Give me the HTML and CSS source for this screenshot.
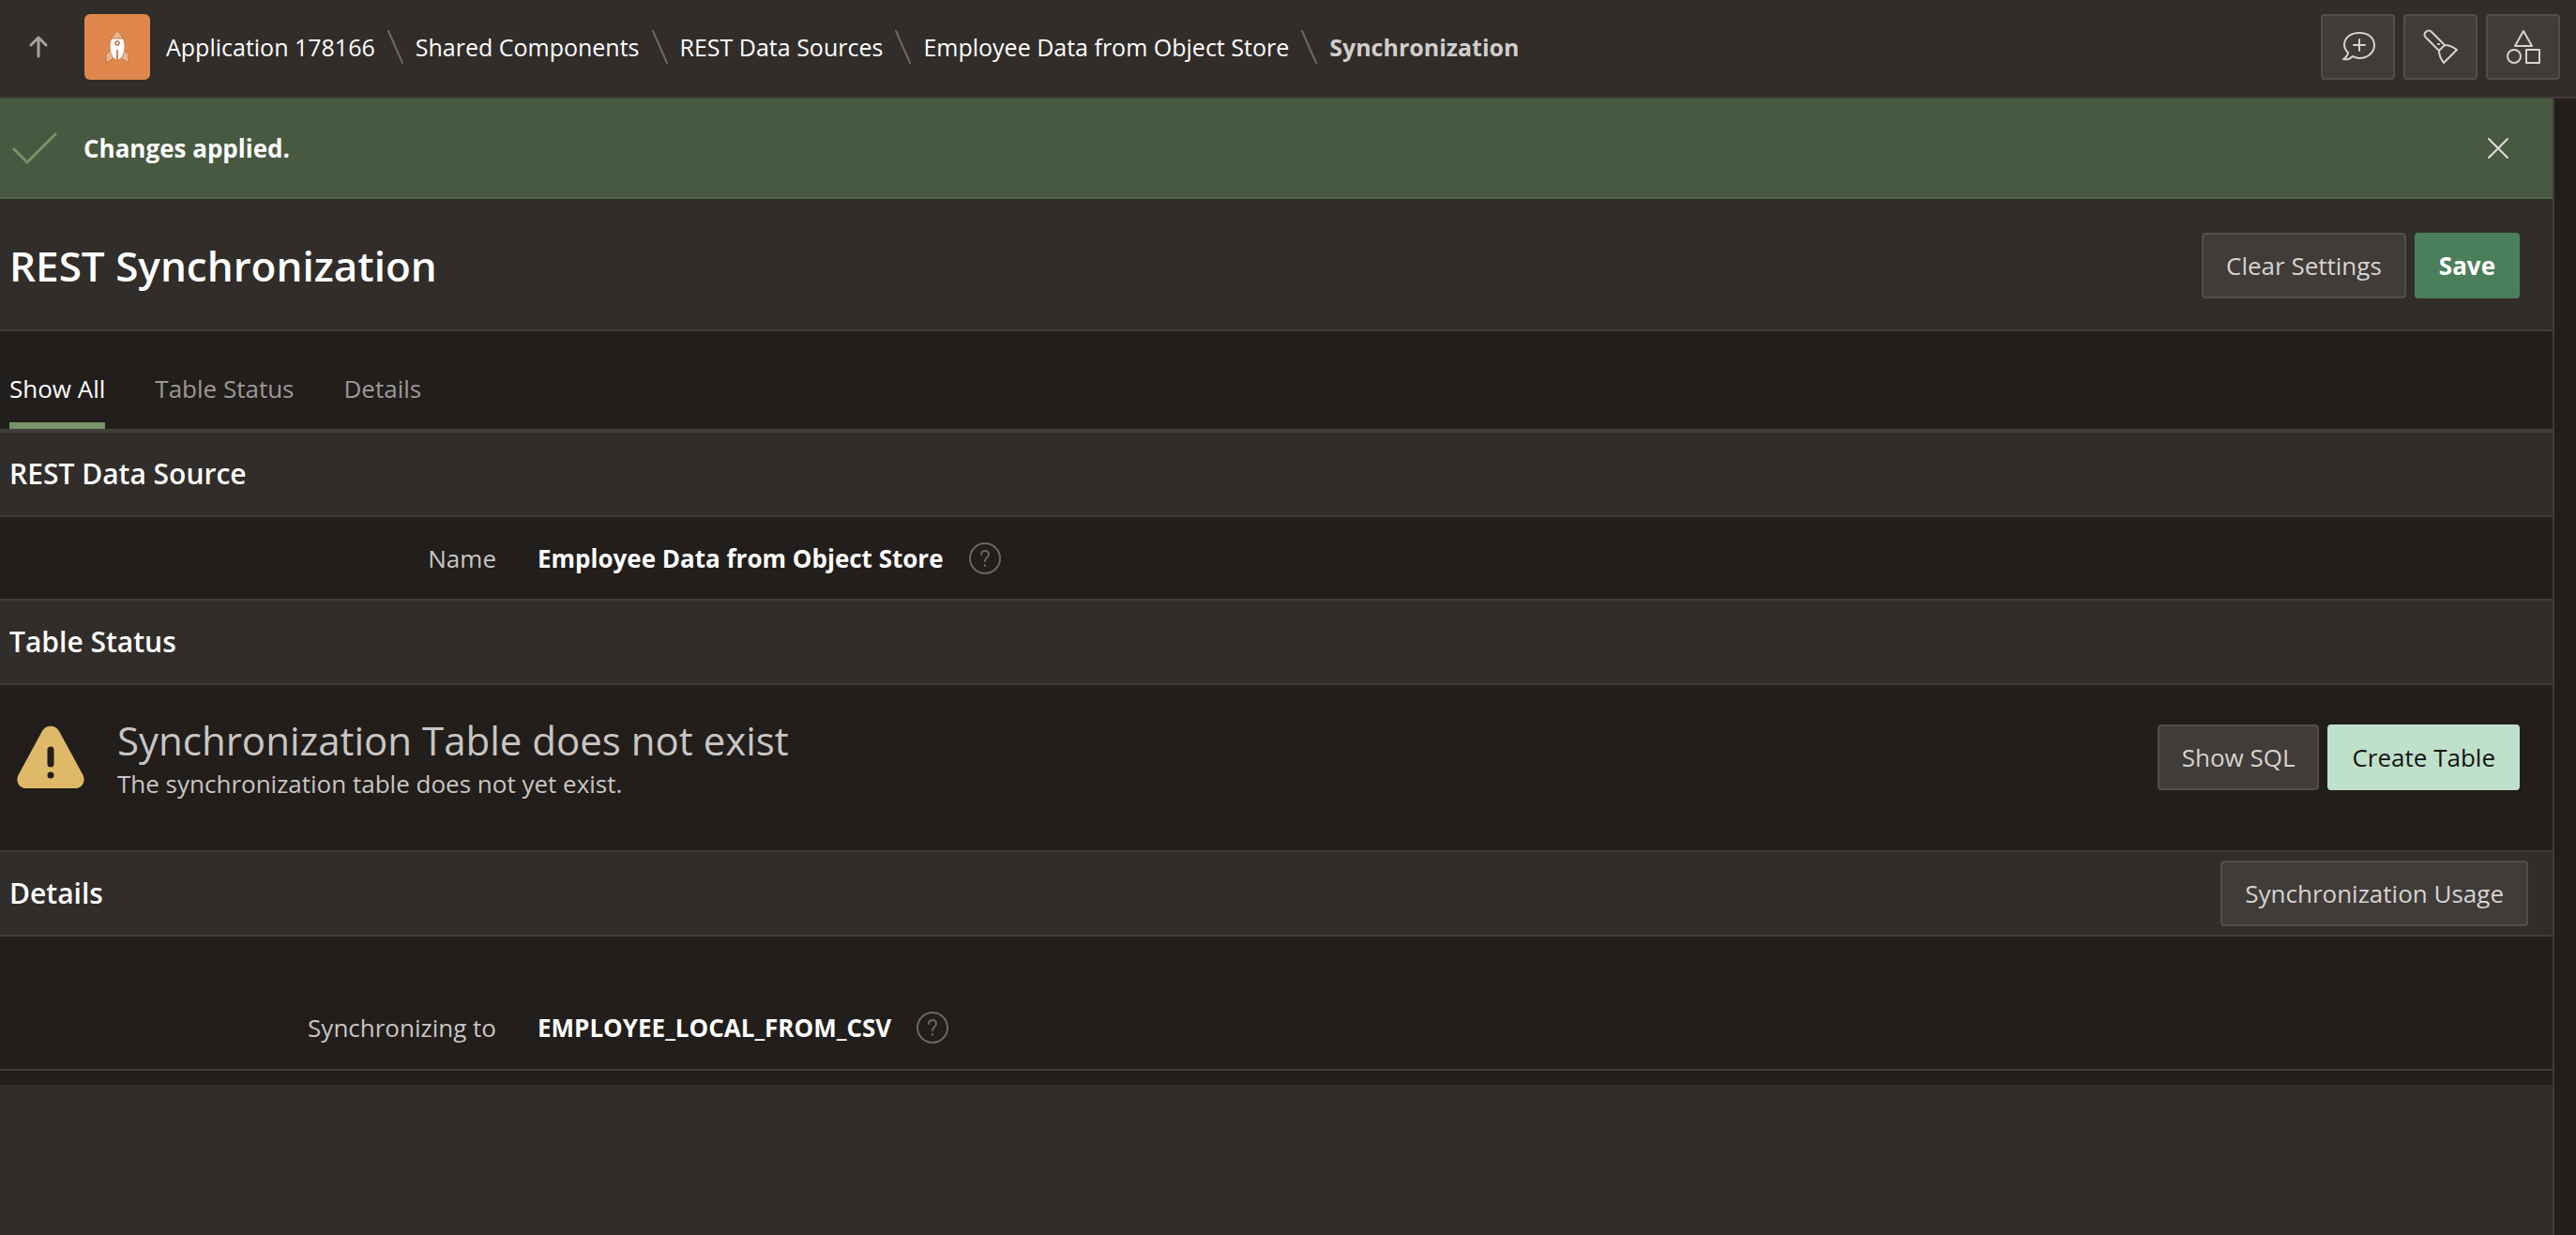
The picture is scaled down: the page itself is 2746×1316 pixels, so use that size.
FILE: index.html
```html
<!DOCTYPE html>
<html lang="en">
<head>
  <meta charset="UTF-8">
  <title>REST Synchronization</title>
  <link rel="stylesheet" href="styles.css">
</head>
<body>

  <header class="topbar">
    <a class="up-link" href="#" aria-label="Up">
      <svg width="20" height="26" viewBox="0 0 20 26" fill="none" stroke="currentColor" stroke-width="3" stroke-linecap="round" stroke-linejoin="round">
        <path d="M10 23V3M2 11l8-8 8 8"/>
      </svg>
    </a>
    <span class="app-icon">
      <svg width="26" height="36" viewBox="0 0 26 36">
        <path d="M6 21l-5 5v9l8-5zM20 21l5 5v9l-8-5z" fill="#eab48e" stroke="#bf7344"/>
        <path d="M13 1c5 4 8 10 8 17 0 6-2 10-5 13-2 1-4 1-6 0-3-3-5-7-5-13C5 11 8 5 13 1z" fill="#fff" stroke="#d08252"/>
        <path d="M13 1c3 3 5 5 6 8H7c1-3 3-5 6-8z" fill="#eab48e" stroke="#bf7344"/>
        <circle cx="13" cy="14" r="2" fill="#fff" stroke="#bf7344" stroke-width="1.5"/>
        <path d="M13 21v13" stroke="#c98560" stroke-width="2"/>
      </svg>
    </span>
    <nav class="breadcrumb">
      <a href="#">Application 178166</a>
      <svg class="sep" width="17" height="36" viewBox="0 0 17 36"><path d="M1 1l15 34"/></svg>
      <a href="#">Shared Components</a>
      <svg class="sep" width="17" height="36" viewBox="0 0 17 36"><path d="M1 1l15 34"/></svg>
      <a href="#">REST Data Sources</a>
      <svg class="sep" width="17" height="36" viewBox="0 0 17 36"><path d="M1 1l15 34"/></svg>
      <a href="#">Employee Data from Object Store</a>
      <svg class="sep" width="17" height="36" viewBox="0 0 17 36"><path d="M1 1l15 34"/></svg>
      <strong>Synchronization</strong>
    </nav>
    <div class="tools">
      <button class="btn icon-btn" type="button" aria-label="Feedback">
        <svg width="38" height="38" viewBox="0 0 38 38">
          <path d="M8 25C5 22 4 20 4 17 4 9 11 4 20 4s16 5 16 13-7 14-16 14c-3 0-5-1-7-2-2 2-6 4-10 3 3-2 5-4 5-7z"/>
          <path d="M20 11v12M14 17h12"/>
        </svg>
      </button>
      <button class="btn icon-btn" type="button" aria-label="Utilities">
        <svg width="38" height="38" viewBox="0 0 38 38">
          <path d="M17 23L3 9C1 7 1 4 3 3c2-2 4-2 6 0l14 14zM23 17c5 0 9 2 13 5L22 36c-3-4-5-8-5-13"/>
          <path d="M16 16h1"/>
        </svg>
      </button>
      <button class="btn icon-btn" type="button" aria-label="Shared components">
        <svg width="38" height="38" viewBox="0 0 38 38">
          <path d="M19 2l9 16H10zM22 22h14v14H22z"/>
          <circle cx="9" cy="29" r="7"/>
        </svg>
      </button>
    </div>
  </header>

  <div class="layout">
    <main>
      <div class="alert">
        <svg class="check" width="48" height="34" viewBox="0 0 48 34"><path d="M2 18l14 14L46 2"/></svg>
        <strong>Changes applied.</strong>
        <button class="close" type="button" aria-label="Close">
          <svg width="24" height="24" viewBox="0 0 24 24"><path d="M2 2l20 20M22 2L2 22"/></svg>
        </button>
      </div>

      <div class="title-bar">
        <h1>REST Synchronization</h1>
        <div class="actions">
          <button class="btn" type="button">Clear Settings</button>
          <button class="btn btn-save" type="button">Save</button>
        </div>
      </div>

      <nav class="tabs">
        <a class="active" href="#all">Show All</a>
        <a href="#status">Table Status</a>
        <a href="#details">Details</a>
      </nav>

      <section>
        <div class="section-header">
          <h2>REST Data Source</h2>
        </div>
        <div class="section-body field">
          <span class="field-label">Name</span>
          <strong>Employee Data from Object Store</strong>
          <button class="help" type="button" aria-label="Help">
            <svg width="36" height="36" viewBox="0 0 36 36"><circle cx="18" cy="18" r="16"/><path d="M14 14c0-3 2-4 4-4s4 1 4 4-4 3-4 7M18 25v1"/></svg>
          </button>
        </div>
      </section>

      <section id="status">
        <div class="section-header">
          <h2>Table Status</h2>
        </div>
        <div class="section-body status">
          <svg class="warning" width="72" height="68" viewBox="0 0 72 68">
            <path d="M27 6c4-7 14-7 18 0l25 46c4 7 0 15-8 15H10C2 67-2 59 2 52z" fill="#deb968"/>
            <path d="M36 26v15" stroke="#221e1b" stroke-width="7" stroke-linecap="round"/>
            <circle cx="36" cy="53" r="3.5" fill="#221e1b"/>
          </svg>
          <div class="status-text">
            <h3>Synchronization Table does not exist</h3>
            <p>The synchronization table does not yet exist.</p>
          </div>
          <div class="actions">
            <button class="btn" type="button">Show SQL</button>
            <button class="btn btn-create" type="button">Create Table</button>
          </div>
        </div>
      </section>

      <section id="details">
        <div class="section-header">
          <h2>Details</h2>
          <button class="btn" type="button">Synchronization Usage</button>
        </div>
        <div class="section-body field field-last">
          <span class="field-label">Synchronizing to</span>
          <strong>EMPLOYEE_LOCAL_FROM_CSV</strong>
          <button class="help" type="button" aria-label="Help">
            <svg width="36" height="36" viewBox="0 0 36 36"><circle cx="18" cy="18" r="16"/><path d="M14 14c0-3 2-4 4-4s4 1 4 4-4 3-4 7M18 25v1"/></svg>
          </button>
        </div>
      </section>
      <div class="page-end"></div>
    </main>
    <aside class="rail"></aside>
  </div>

</body>
</html>
```
FILE: styles.css
```css
/* Reset */
* {
  margin: 0;
  padding: 0;
  box-sizing: border-box;
}

body {
  display: flex;
  flex-direction: column;
  min-height: 100vh;
  background-color: #221e1b;
  color: #fff;
  font-family: 'Open Sans', 'Noto Sans', sans-serif;
  font-size: 26px;
  line-height: 36px;
}

a {
  color: inherit;
  text-decoration: none;
}

svg {
  display: block;
  flex-shrink: 0;
}

button {
  font: inherit;
  cursor: pointer;
}

/* Buttons */
.btn {
  height: 70px;
  padding: 0 24px;
  border: 2px solid #524e4b;
  border-radius: 4px;
  background-color: #403c39;
  color: #d5d3d1;
}

.btn-save {
  border-color: #4b7f5b;
  background-color: #4b7f5b;
  color: #fff;
  font-weight: 700;
}

.btn-create {
  border-color: #bfe0cb;
  background-color: #bfe0cb;
  color: #161513;
}

.icon-btn {
  display: flex;
  align-items: center;
  justify-content: center;
  width: 79px;
  padding: 0;
}

.icon-btn svg,
.close svg,
.check,
.help svg,
.sep {
  fill: none;
  stroke: currentColor;
  stroke-width: 2;
  stroke-linecap: round;
  stroke-linejoin: round;
}

/* Top bar */
.topbar {
  display: flex;
  align-items: center;
  padding: 15px 17px 18px 0;
  border-bottom: 2px solid #403c39;
  background-color: #312d2a;
}

.up-link {
  display: flex;
  justify-content: center;
  width: 90px;
  padding-right: 8px;
  color: #a5a29f;
}

.app-icon {
  display: flex;
  align-items: center;
  justify-content: center;
  width: 70px;
  height: 70px;
  border-radius: 6px;
  background-color: #e0874d;
}

.breadcrumb {
  display: flex;
  align-items: center;
  gap: 13px;
  margin-left: 17px;
  font-size: 25px;
}

.breadcrumb strong {
  color: #d0cecc;
}

.sep {
  color: #6c6966;
}

.tools {
  display: flex;
  gap: 9px;
  margin-left: auto;
}

/* Page */
.layout {
  display: flex;
  flex: 1;
}

main {
  display: flex;
  flex-direction: column;
  flex: 1;
  border-right: 2px solid #403c39;
}

.rail {
  width: 23px;
}

.alert {
  display: flex;
  align-items: center;
  height: 107px;
  padding: 0 46px 0 13px;
  border-bottom: 2px solid #4d6648;
  background-color: #475a41;
}

.alert strong {
  margin-left: 28px;
}

.check {
  color: #759468;
  stroke-width: 3;
}

.close {
  margin-left: auto;
  border: none;
  background: none;
  color: #dde0da;
}

.title-bar {
  display: flex;
  align-items: center;
  justify-content: space-between;
  padding: 36px 35px 33px 10px;
  border-bottom: 2px solid #403c39;
  background-color: #312d2a;
}

h1 {
  font-size: 44px;
  font-weight: 600;
  line-height: 56px;
}

.actions {
  display: flex;
  gap: 9px;
}

.tabs {
  display: flex;
  gap: 53px;
  padding: 0 10px;
  border-bottom: 4px solid #403c39;
  color: #9c9997;
}

.tabs a {
  padding: 43px 0 18px;
  border-bottom: 7px solid transparent;
}

.tabs .active {
  border-color: #759468;
  color: #fff;
}

/* Sections */
.section-header {
  display: flex;
  align-items: center;
  justify-content: space-between;
  height: 90px;
  padding: 0 26px 0 10px;
  border-bottom: 2px solid #403c39;
  background-color: #312d2a;
}

h2 {
  font-size: 30px;
  font-weight: 600;
}

.section-body {
  display: flex;
  align-items: center;
  border-bottom: 2px solid #403c39;
}

.field {
  padding: 26px 10px 25px;
}

.field-last {
  padding: 79px 10px 26px;
}

.field-label {
  width: 519px;
  margin-right: 44px;
  color: #c8c6c4;
  text-align: right;
}

.help {
  margin-left: 26px;
  border: none;
  background: none;
  color: #686562;
}

.status {
  padding: 31px 35px 53px 18px;
  color: #c8c6c4;
}

.status-text {
  margin: 0 auto 0 35px;
}

h3 {
  font-size: 42px;
  font-weight: 400;
  line-height: 56px;
}

.page-end {
  flex: 1;
  margin-top: 15px;
  background-color: #312d2a;
}
```
